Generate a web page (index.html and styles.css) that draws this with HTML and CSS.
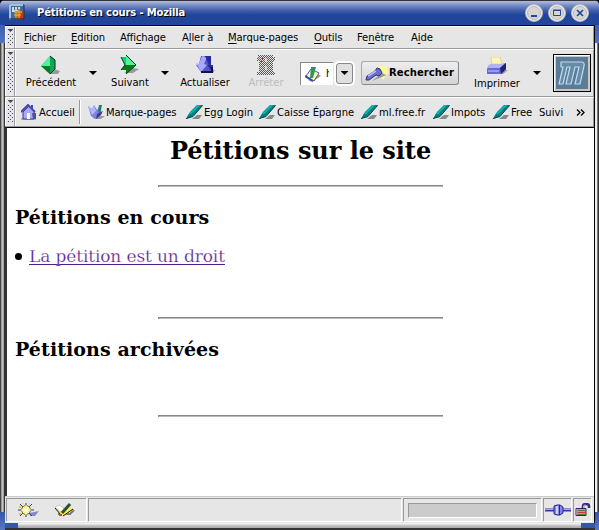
FILE: index.html
```html
<!DOCTYPE html>
<html lang="fr">
<head>
<meta charset="utf-8">
<title>Pétitions en cours - Mozilla</title>
<link rel="stylesheet" href="styles.css">
</head>
<body>
<svg width="0" height="0" class="defs" aria-hidden="true">
  <symbol id="pen" viewBox="0 0 18 16">
    <path d="M6 15h7l3-4h-5z" fill="#888"/>
    <path d="M1 13l3-5 7-7h6L7 12z" fill="#008080"/>
    <path d="M3 10l9-9h2l-9 9z" fill="#00c4c4"/>
    <path d="M0 15l3-5 4 2z" fill="#008080"/>
    <path d="M0 14.500l7-2L16.500 1.500" stroke="#003838" fill="none"/>
  </symbol>
</svg>
<div class="window">
  <header class="titlebar">
    <svg class="app" width="16" height="16" viewBox="0 0 16 16"><path d="M1 0h14v14l-2 2H0V2z" fill="#466b96"/><path d="M1 0h13v2H2v12H0V1z" fill="#9cc3dc"/><path d="M3 3h2v3h1V3h2v3h1V3h2v2H9v3H3z" fill="#c4dce8"/><path d="M6 7h8v8H6z" fill="#a65a22"/><path d="M7 5v9M10 5v9M5 8h8M5 11h8" stroke="#f5b547"/><path d="M12 10h2v5h-3z" fill="#e02a18"/><path d="M15 1v14H2" fill="none" stroke="#182c48"/></svg>
    <h1>Pétitions en cours - Mozilla</h1>
    <div class="controls">
      <svg width="18" height="18" viewBox="0 0 18 18"><circle cx="9" cy="9" r="8.5" fill="#eee" stroke="#b8b8bd"/><circle cx="9" cy="9" r="6.5" fill="#d5d5d5" stroke="#bbb"/><path d="M6 12h6" stroke="#20459b" stroke-width="2"/></svg>
      <svg width="18" height="18" viewBox="0 0 18 18"><circle cx="9" cy="9" r="8.5" fill="#eee" stroke="#b8b8bd"/><circle cx="9" cy="9" r="6.5" fill="#d5d5d5" stroke="#bbb"/><path d="M5.5 6.5h7v5h-7zM5 6h8" fill="none" stroke="#20459b"/></svg>
      <svg width="18" height="18" viewBox="0 0 18 18"><circle cx="9" cy="9" r="8.5" fill="#eee" stroke="#b8b8bd"/><circle cx="9" cy="9" r="6.5" fill="#d5d5d5" stroke="#bbb"/><path d="M6 6l6 6M12 6l-6 6" stroke="#20459b" stroke-width="1.7"/></svg>
    </div>
  </header>
  <div class="frame">
    <nav class="row menus"><i class="grip"></i>
      <span class="w1"><u>F</u>ichier</span><span class="w2"><u>E</u>dition</span><span class="w3">Affi<u>c</u>hage</span><span class="w4">A<u>l</u>ler à</span><span class="w5"><u>M</u>arque-pages</span><span class="w6"><u>O</u>utils</span><span class="w7">Fe<u>n</u>être</span><span class="w8">A<u>i</u>de</span>
    </nav>
    <div class="row tools"><i class="grip"></i>
      <button class="tool back"><svg width="20" height="20" viewBox="0 0 20 20"><path d="M5 16l4 3h8l2-3-6-2z" fill="#999"/><path d="M0 11L9 1l5 4v9l-5 5z" fill="#18b878"/><path d="M0 11L9 1v10z" fill="#50f09c"/><path d="M0 11h9v8z" fill="#087c18"/><path d="M9 1l5 4v9l-5 5z" fill="#10a858"/><path d="M9 1l5 4v9l-5 5" fill="none" stroke="#002c18"/></svg><span>Précédent</span></button>
      <i class="drop d1"></i>
      <button class="tool next"><svg width="20" height="20" viewBox="0 0 20 20"><path d="M4 18h9l6-4-6-1z" fill="#999"/><path d="M1 2h5V0l10 10L6 19v-4H1l4-5z" fill="#18c878"/><path d="M6 0l10 10H6z" fill="#50f09c"/><path d="M1 15l4-5h11L6 19v-4z" fill="#087818"/><path d="M6 0l10 10L6 19M1 2l4 8-4 5" fill="none" stroke="#003818"/></svg><span>Suivant</span></button>
      <i class="drop d2"></i>
      <button class="tool reload"><svg width="20" height="20" viewBox="0 0 20 20"><path d="M9 18h9l2-3-5-1z" fill="#999"/><path d="M6 1h10v9h2v7H6l-5-7 3-1z" fill="#5058c0"/><path d="M7 1L4 9l-3-1 5 9 6-7-3-1 3-7z" fill="#a8a8ff"/><path d="M10 1h6v9h2l-2 5-4-5h2z" fill="#2828a0"/><path d="M6 17h11v-5" fill="none" stroke="#101058" stroke-width="2"/></svg><span>Actualiser</span></button>
      <button class="tool stop"><svg width="20" height="20" viewBox="0 0 20 20"><defs><pattern id="dots" width="2" height="2" patternUnits="userSpaceOnUse"><path d="M0 0h1v1H0zM1 1h1v1H1z" fill="#555569"/></pattern></defs><path d="M2 0h15v2h2v4h-2v11h2v3H1v-3h2V6H1V2h1z" fill="url(#dots)"/><path d="M6 3h1v2H6zM5 5h1v2H5z" fill="#e02838"/><path d="M9 3h2v4H9zM9 11h2v4H9z" fill="#f3f3f3" opacity=".6"/></svg><span>Arrêter</span></button>
      <div class="url"><svg width="16" height="16" viewBox="0 0 16 16"><path d="M3 14l4 2 9-6-3-2z" fill="#999"/><path d="M1 10l5-7 8 4-5 8z" fill="#ffffb0" stroke="#4850a0"/><path d="M0 10l8 5" stroke="#4048a0" stroke-width="2"/><path d="M6 1h5L8 12H5z" fill="#2c9464"/></svg><span>h</span></div>
      <button class="combo"><i class="drop"></i></button>
      <button class="search"><svg width="24" height="18" viewBox="0 0 24 18"><path d="M13 3l2-3 2 3 4-2 1 5 2 3-4 2-1 5-5-4z" fill="#fff69a"/><path d="M7 17l10-4 4-2-4-2z" fill="#999"/><path d="M2 12l8-5 2-3 3 1 2 4-3 3-3-1-7 5H1z" fill="#6870cb" stroke="#28307f"/><path d="M3 12l8-5" stroke="#b8b8ff" stroke-width="1.5"/></svg><b>Rechercher</b></button>
      <button class="tool print"><svg width="23" height="18" viewBox="0 0 23 18"><path d="M4 17h13l5-4h-4z" fill="#999"/><path d="M3 8L1 12v5h14l5-5V6l-4 1z" fill="#6868d8"/><path d="M1 11L4 7h14l-4 4z" fill="#b0b0ff"/><path d="M14 11l6-5v6l-5 5" fill="#23236b"/><path d="M5 0h9l2 7H6z" fill="#fff6b2" stroke="#c8bc80" stroke-width=".5"/><path d="M2 14h11" stroke="#c8c8ff"/></svg><span>Imprimer</span></button>
      <i class="drop d3"></i>
      <svg class="logo" width="38" height="38" viewBox="0 0 38 38"><path d="M0 0h38v38H0z" fill="#000"/><path d="M1 1h36v36H1z" fill="#fff"/><path d="M2 2h35v35H2z" fill="#c8c8c8"/><path d="M3 3h32v32H3z" fill="#5c7b96"/><path d="M8 8h20q4 0 3 4l-4 18h-5l4-17h-4l-4 17h-5l4-17h-3l-4 17H6l4-17H8z" fill="#668ba8" stroke="#c0dced" stroke-width="1.2"/></svg>
    </div>
    <nav class="row marks"><i class="grip"></i>
      <a class="home"><svg width="16" height="16" viewBox="0 0 16 16"><path d="M0 15h15" stroke="#4a9a70"/><path d="M2 8v7h11V7L8 2z" fill="#a8a8ff" stroke="#38388c"/><path d="M0 8l7-7 7 7M11 1v4" stroke="#4848a8" stroke-width="2" fill="none"/><path d="M6 9h3v6H6z" fill="#fff"/><path d="M11 9h4v6h-3z" fill="#505090"/></svg><span>Accueil</span></a>
      <a class="mp"><svg width="17" height="16" viewBox="0 0 17 16"><path d="M5 15h8l4-3h-5z" fill="#999"/><path d="M0 2l4 3 2-4 3 5 3-4 2 8-7 5-4-3z" fill="#8080df"/><path d="M0 2l4 3 2-4 2 6-4 4z" fill="#b5b5ff"/><path d="M11 1h3l-2 9-2-3z" fill="#177c72"/><path d="M9 10l6-3-3 5-4 3z" fill="#383890"/></svg><span>Marque-pages</span></a>
      <a class="m1"><svg width="18" height="16"><use href="#pen"/></svg><span>Egg Login</span></a>
      <a class="m2"><svg width="18" height="16"><use href="#pen"/></svg><span>Caisse Épargne</span></a>
      <a class="m3"><svg width="18" height="16"><use href="#pen"/></svg><span>ml.free.fr</span></a>
      <a class="m4"><svg width="18" height="16"><use href="#pen"/></svg><span>Impots</span></a>
      <a class="m5"><svg width="18" height="16"><use href="#pen"/></svg><span>Free</span></a>
      <a class="m6"><span>Suivi</span></a>
      <svg class="more" width="9" height="7" viewBox="0 0 9 7"><path d="M1 .5l3 3-3 3M5 .5l3 3-3 3" fill="none" stroke="#000" stroke-width="1.3"/></svg>
    </nav>
    <main>
      <h2>Pétitions sur le site</h2>
      <hr>
      <h3>Pétitions en cours</h3>
      <p><i class="bullet"></i><a href="#">La pétition est un droit</a></p>
      <hr>
      <h3 class="archived">Pétitions archivées</h3>
      <hr>
    </main>
    <footer>
      <div class="cell icons"><svg width="22" height="14" viewBox="0 0 22 14"><path d="M11 10l10-2-4 5h-5z" fill="#8888c8"/><path d="M8 0v14M0 7h16M2 1l12 12M14 1L2 13" stroke="#38386b"/><circle cx="8" cy="7" r="4.5" fill="#ffef58" stroke="#686850"/><path d="M8 2v10M3 7h10M5 4l6 6M11 4l-6 6" stroke="#fff"/><path d="M1 4h2M4 0h1M11 0h1M1 11h2" stroke="#e8c820" stroke-width="2"/></svg><svg width="20" height="14" viewBox="0 0 20 14"><path d="M3 11h12l4-4" stroke="#777" stroke-width="2" fill="none"/><path d="M0 5l3-2 5 2 7-1 3 3-9 6-4-1z" fill="#ffef50"/><path d="M0 4l4-2 5 3-3 4z" fill="#fff" stroke="#aaa" stroke-width=".6"/><path d="M7 10l8-9" stroke="#264f43" stroke-width="3"/><path d="M8 13l10-7M0 5l6 7" stroke="#111"/><path d="M4 11h3v2H4z" fill="#c73f55"/></svg></div>
      <div class="cell status"></div>
      <div class="cell progress"><i></i></div>
      <div class="cell plug"><svg width="26" height="12" viewBox="0 0 26 12"><path d="M0 6h26" stroke="#3838a8" stroke-width="3"/><path d="M0 5.5h26" stroke="#a0a0ff"/><path d="M9 2l3-1h3l3 2v6l-3 2h-3l-3-1z" fill="#8585e8" stroke="#28288c"/><path d="M12 2v8" stroke="#d0d0ff" stroke-width="2"/><path d="M14.500 1v10" stroke="#28288c"/></svg></div>
      <div class="cell lock"><svg width="16" height="14" viewBox="0 0 16 14"><path d="M8 6V3q0-2 3-2t3 2v2" fill="none" stroke="#30307c" stroke-width="2.500"/><path d="M8.500 5V3q0-1 2-1" fill="none" stroke="#aaf"/><path d="M1 5.500h10v7H1z" fill="#c3a548" stroke="#282868"/><path d="M2 7.500h8M2 11.500h8" stroke="#5d7a28"/><path d="M2 9.500h8" stroke="#d03838"/><path d="M2 6v6" stroke="#aaf"/></svg></div>
    </footer>
  </div>
</div>
</body>
</html>
```
FILE: styles.css
```css
* { box-sizing: border-box; }
body {
  margin: 0;
  background: #000;
  font: 10px/14px "DejaVu Sans", sans-serif;
  color: #000;
}
.defs { position: absolute; }
svg { flex: none; display: block; }
.window {
  width: 599px;
  height: 530px;
  padding: 0 4px 7px 5px;
  border-radius: 5px 5px 0 0;
  overflow: hidden;
  background:
    linear-gradient(#20459b, #5273bd) 0 0 / 5px 43px no-repeat,
    linear-gradient(#20459b, #5273bd) 100% 0 / 4px 43px no-repeat,
    linear-gradient(#3557a7, #5879bd) 0 100% / 5px 18px no-repeat,
    linear-gradient(#3557a7, #5879bd) 100% 100% / 4px 18px no-repeat,
    linear-gradient(#3557a7 5px, #333 5px) 0 100% / 18px 7px no-repeat,
    linear-gradient(#3557a7 5px, #333 5px) 100% 100% / 18px 7px no-repeat,
    linear-gradient(transparent 523px, #eee 523px 524px, #b8b8b8 526px, #aaa 528px, #333 528px),
    linear-gradient(90deg, #444 0 1px, #999 1px 2px, #c6c6c6 2px 3px, #999 3px 4px, #333 4px 5px, #ddd 5px 595px, #eee 595px 597px, #777 597px 598px, #333 598px);
}
.titlebar {
  display: flex;
  align-items: center;
  height: 25px;
  margin: 0 -4px 0 -5px;
  padding: 0 10px 0 9px;
  border-top: 1px solid #333;
  background: linear-gradient(#b4bfdf, #7d91c8 4px, #3b5aa9 10px, #20459b 14px);
}
.titlebar h1 {
  flex: 1;
  margin: 0 0 1px 12px;
  font-size: 10px;
  line-height: 14px;
  letter-spacing: -.17px;
  color: #fff;
  text-shadow: 1px 1px #000;
  white-space: nowrap;
}
.app { margin-bottom: 3px; }
.controls { display: flex; gap: 5px; }
.frame {
  height: 498px;
  border: solid #000;
  border-width: 1px 1px 0 0;
  background: #e6e6e6;
}
.row {
  display: flex;
  align-items: center;
  border-top: 1px solid #fff;
  border-bottom: 1px solid #999;
  border-right: 1px solid #999;
  white-space: nowrap;
}
.grip {
  display: flex;
  flex-direction: column;
  align-items: center;
  align-self: stretch;
  flex: none;
  gap: 2px;
  width: 10px;
  padding: 2px 0 3px 1px;
  border-left: 1px solid #fff;
  border-right: 1px solid #999;
  box-shadow: 1px 0 #fff;
}
.grip::before {
  content: "";
  width: 6px;
  height: 3px;
  background: #446;
  clip-path: polygon(0 0, 100% 0, 50% 100%);
}
.grip::after {
  content: "";
  flex: 1;
  width: 5px;
  background:
    conic-gradient(at 1px 1px, transparent 75%, #446 0) 0 0 / 4px 4px,
    conic-gradient(at 1px 1px, transparent 75%, #446 0) 2px 2px / 4px 4px;
}
.menus { height: 23px; }
.menus .grip { margin-right: 9px; }
.menus span { letter-spacing: -.1px; }
.menus u { text-underline-offset: 2px; }
.w1 { width: 47px; }
.w2 { width: 49px; }
.w3 { width: 62px; }
.w4 { width: 46px; }
.w5 { width: 86px; }
.w6 { width: 43px; }
.w7 { width: 54px; }
.tools { height: 48px; }
button { font: inherit; color: inherit; padding: 0; border: 0; background: none; flex: none; }
.tool {
  display: flex;
  flex-direction: column;
  align-items: center;
  height: 36px;
}
.tool span { height: 14px; margin-top: 1px; }
.back { width: 52px; margin-left: 10px; }
.next { width: 42px; margin-left: 12px; }
.reload { width: 50px; margin-left: 11px; }
.stop { width: 38px; margin-left: 17px; }
.stop span { color: #bbb; }
.drop {
  display: block;
  flex: none;
  width: 8px;
  height: 4px;
  background: #000;
  clip-path: polygon(0 0, 100% 0, 50% 100%);
}
.d1 { margin-left: 12px; }
.d2 { margin-left: 10px; }
.d3 { margin-left: 13px; }
.url {
  display: flex;
  align-items: center;
  width: 33px;
  height: 23px;
  margin-left: 15px;
  padding-left: 4px;
  border: solid #888;
  border-width: 1px 0 0 1px;
  background: #fff;
}
.url span { width: 3px; overflow: hidden; margin-left: 5px; }
.combo {
  display: flex;
  align-items: center;
  justify-content: center;
  width: 17px;
  height: 21px;
  margin-left: 3px;
  border: 1px solid #888;
  border-radius: 3px;
  background: #e0e0e0;
  box-shadow: 0 0 0 2px #fff;
}
.search {
  display: flex;
  align-items: center;
  width: 98px;
  height: 24px;
  margin-left: 8px;
  padding-left: 3px;
  border: 1px solid #aaa;
  border-right-color: #888;
  border-bottom-color: #888;
  border-radius: 3px;
  background: linear-gradient(#eee, #d4d4d4);
}
.search b { font-size: 10px; letter-spacing: .1px; }
.print { width: 46px; margin-left: 15px; }
.print svg { margin-top: 2px; }
.print span { margin-top: 2px; }
.logo { margin-left: 12px; }
.marks { height: 30px; }
.marks a { display: flex; align-items: center; height: 24px; flex: none; }
.marks span { padding-top: 2px; }
.marks .home { width: 59px; margin-left: 6px; border-right: 1px solid #999; box-shadow: 1px 0 #fff; gap: 2px; }
.marks .mp { width: 106px; padding-left: 8px; gap: 1px; letter-spacing: -.08px; }
.marks .m1 { width: 73px; }
.m2 { width: 102px; }
.m3 { width: 72px; }
.m4 { width: 60px; }
.m5 { width: 46px; }
.m6 { width: 36px; }
.more { margin-left: 1px; }
main {
  height: 369px;
  padding: 8px 8px 0 8px;
  border: solid #000;
  border-width: 1px 0 0 2px;
  border-left-color: #333;
  background: #fff;
  font-family: "DejaVu Serif", serif;
}
main h2 { margin: 0; font-size: 24px; line-height: 30px; letter-spacing: -.04px; text-align: center; }
main hr {
  width: 285px;
  height: 2px;
  margin: 18px auto 0;
  border: solid #888;
  border-width: 1px 0 0 1px;
  background: #bbb;
}
main h2 + hr { margin-top: 19px; }
main h3 { margin: 18px 0 0; font-size: 19px; line-height: 24px; letter-spacing: .08px; }
main p { display: flex; align-items: center; height: 24px; margin: 15px 0 49px; font-size: 17px; white-space: nowrap; }
main p a {
  height: 20px;
  margin-top: -3px;
  border-bottom: 1px solid #551a8b;
  line-height: 22px;
  letter-spacing: -.12px;
  color: #551a8b;
  text-decoration: none;
  -webkit-text-stroke: .25px #fff;
}
.bullet { width: 7px; height: 7px; margin-right: 7px; border-radius: 50%; background: #000; }
main .archived { margin-bottom: 54px; }
footer { display: flex; gap: 2px; height: 27px; padding: 1px 3px 2px 1px; border-top: 1px solid #ccc; }
.cell {
  display: flex;
  align-items: center;
  justify-content: center;
  border: solid #999;
  border-width: 1px 0 0 1px;
  box-shadow: 1px 1px #fff;
}
.icons { width: 80px; gap: 15px; }
.status { flex: 1; }
.progress { width: 138px; }
.progress i { width: 129px; height: 15px; border: 1px solid #999; border-right-color: #fff; border-bottom-color: #fff; background: #cacccb; }
.plug { width: 28px; }
.lock { width: 18px; }
```
